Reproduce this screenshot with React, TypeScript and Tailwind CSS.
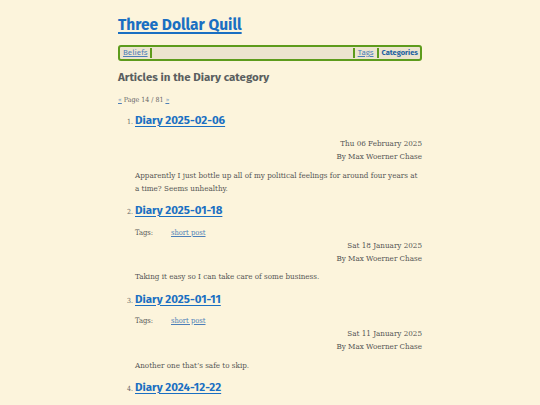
import React from 'react'

type Post = {
  title: string
  tags?: string[]
  date: string
  body: string
}

const POSTS: Post[] = [
  {
    title: 'Diary 2025-02-06',
    date: 'Thu 06 February 2025',
    body: 'Apparently I just bottle up all of my political feelings for around four years at a time? Seems unhealthy.',
  },
  {
    title: 'Diary 2025-01-18',
    tags: ['short post'],
    date: 'Sat 18 January 2025',
    body: 'Taking it easy so I can take care of some business.',
  },
  {
    title: 'Diary 2025-01-11',
    tags: ['short post'],
    date: 'Sat 11 January 2025',
    body: 'Another one that\u2019s safe to skip.',
  },
  {
    title: 'Diary 2024-12-22',
    tags: ['short post'],
    date: 'Sun 22 December 2024',
    body: 'More of the same.',
  },
]

const HEAD = { fontFamily: '"Fira Sans", "Open Sans", "Noto Sans", sans-serif' }
const BODY = { fontFamily: '"Roboto Slab", "DejaVu Serif Condensed", "Liberation Serif", serif' }

export default function App() {
  return (
    <div className="min-h-[405px] bg-[#fcf4dc] text-[#555]" style={BODY}>
      <div className="mx-auto w-[304px] pt-[14px]">
        <h1 className="text-[15.5px] font-bold leading-[22px]" style={HEAD}>
          <a href="#" className="text-[#1a6fc2] underline decoration-2 underline-offset-2">
            Three Dollar Quill
          </a>
        </h1>

        {/* nav bar */}
        <nav
          className="mt-[9px] flex h-[16px] items-center rounded-[3px] border-2 border-[#5d9b1c] bg-[#ece4cf] px-[2px] text-[8px] leading-[10px]"
          style={HEAD}
        >
          <a href="#" className="px-[1px] text-[#4d7fb8] underline">Beliefs</a>
          <span className="ml-[1px] h-[10px] border-l-2 border-[#5d9b1c]" />
          <span className="flex-1" />
          <span className="h-[10px] border-l-2 border-[#5d9b1c]" />
          <a href="#" className="px-[3px] text-[#4d7fb8] underline">Tags</a>
          <span className="h-[10px] border-l-2 border-[#5d9b1c]" />
          <a href="#" className="pl-[3px] text-[7.5px] font-bold text-[#22609f]">Categories</a>
        </nav>

        <h2 className="mt-[8px] text-[11.5px] font-bold leading-[16px] text-[#5a5f60]" style={HEAD}>
          Articles in the Diary category
        </h2>

        <p className="mt-[9px] text-[7px] leading-[12px] text-[#666]">
          <a href="#" className="text-[#4d7fb8] underline">«</a> Page 14 / 81{' '}
          <a href="#" className="text-[#4d7fb8] underline">»</a>
        </p>

        <ol className="mt-[6px] list-decimal pl-[17px] marker:text-[7px] marker:text-[#666]">
          {POSTS.map((p) => (
            <li key={p.title} className="mb-[7.5px]">
              <h3 className="text-[11.5px] font-bold leading-[16px]" style={HEAD}>
                <a href="#" className="text-[#1a6fc2] underline decoration-1 underline-offset-2">
                  {p.title}
                </a>
              </h3>
              {p.tags ? (
                <div className="mt-[8.5px] flex text-[7.5px] leading-[12px]">
                  <span className="w-[36px]">Tags:</span>
                  {p.tags.map((t) => (
                    <a key={t} href="#" className="text-[#4d7fb8] underline">{t}</a>
                  ))}
                </div>
              ) : (
                <div className="h-[9px]" />
              )}
              <div className="text-right text-[8px] leading-[13px]">
                <div>{p.date}</div>
                <div>By Max Woerner Chase</div>
              </div>
              <p className="mt-[5.5px] text-[8px] leading-[13px]">{p.body}</p>
            </li>
          ))}
        </ol>
      </div>
    </div>
  )
}
